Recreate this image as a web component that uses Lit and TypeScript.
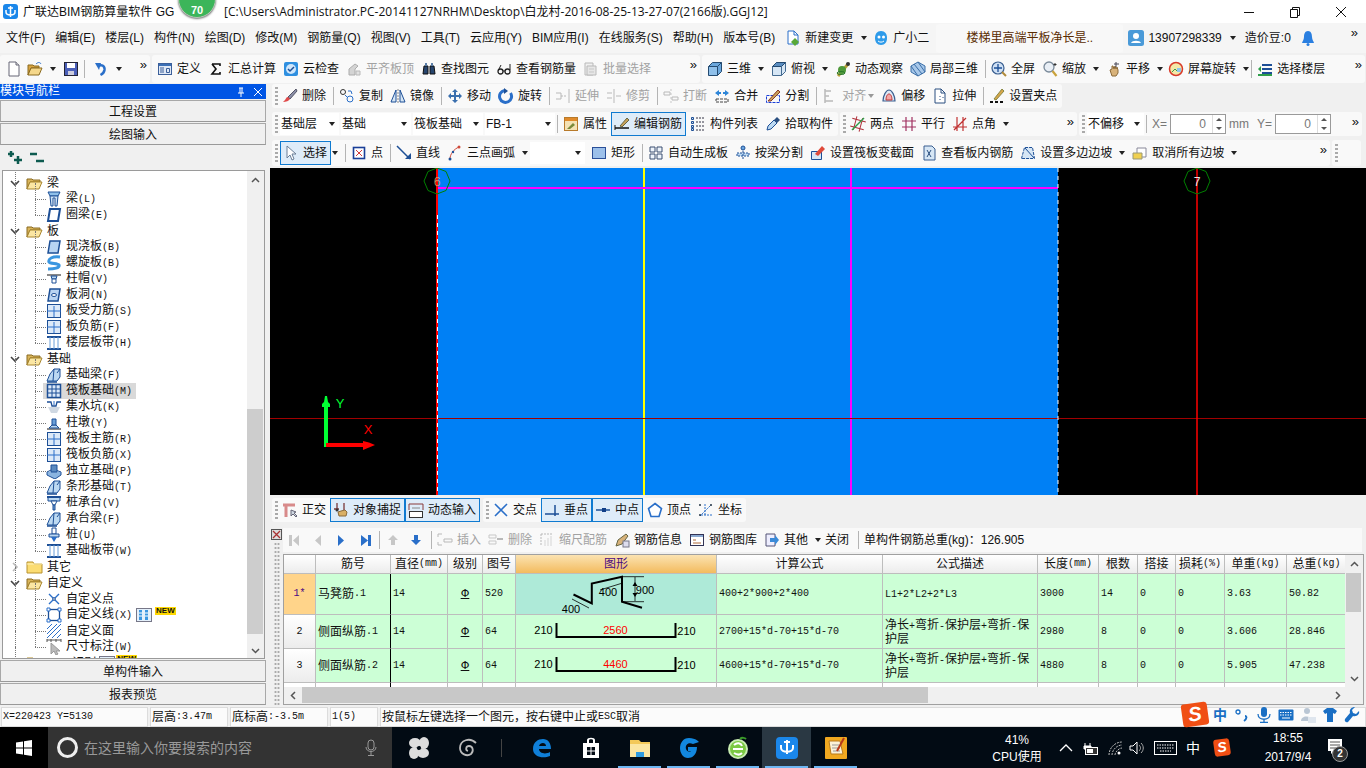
import { LitElement, html, svg, css } from "lit";
import { customElement } from "lit/decorators.js";

// icons, 16x16 unless the wrapper says otherwise
const B = "#2a6fc9";
const D = "#1d4f96";
const I: Record<string, any> = {
  new: svg`<path d="M3 1h7l3 3v11H3z" fill="#fff" stroke="#667"/><path d="M10 1v3h3" fill="#ddd" stroke="#667"/>`,
  open: svg`<path d="M1 4h5l1 1h5v2H4l-3 7z" fill="#d9a441" stroke="#8a6a20"/><path d="M4 7h11l-3 7H1z" fill="#f5d78a" stroke="#8a6a20"/><path d="M9 3c2-2 4-2 5 0" stroke="${B}" fill="none"/>`,
  save: svg`<rect x="1.5" y="1.5" width="13" height="13" fill="#4a5fb8" stroke="#223"/><rect x="4" y="2" width="8" height="5" fill="#fff"/><rect x="5" y="10" width="6" height="4" fill="#ccd"/>`,
  undo: svg`<path d="M5 5c4-2 7 0 6.500 4-.3 2-2 4-4 5" stroke="${B}" stroke-width="2.500" fill="none"/><path d="M2 2h6L6 9z" fill="${B}"/>`,
  define: svg`<rect x="1.500" y="2.500" width="13" height="11" fill="#dfe8f5" stroke="#3b5f9a"/><rect x="2" y="3" width="12" height="2" fill="#3b6fb5"/><path d="M3 7h4M3 9h4M3 11h4M9.500 7.500h3v4h-3z" stroke="#3b5f9a" fill="none"/>`,
  sigma: svg`<path d="M4 3h8v2M4 3l4 5-4 5h8v-2" fill="none" stroke="#111" stroke-width="1.600"/>`,
  cloud: svg`<rect x="1" y="1" width="14" height="14" rx="2" fill="#2e8fe0"/><circle cx="8" cy="8" r="5" fill="#cfe6fb"/><path d="M5 8l2 2 4-4" stroke="${D}" stroke-width="1.500" fill="none"/>`,
  flush: svg`<path d="M3 14V8l6-5 3 2-3 3v6z" fill="#ccc" stroke="#999"/><path d="M10 10h4v4h-4z" fill="#ddd" stroke="#aaa"/>`,
  binoc: svg`<path d="M2 13l1-8h4v8zM9 13V5h4l1 8z" fill="#26456e" stroke="#111"/><path d="M4 2h2v3H4zM10 2h2v3h-2z" fill="#5b7fa8"/><rect x="7" y="6" width="2" height="3" fill="#888"/>`,
  glass: svg`<circle cx="4.500" cy="10.500" r="2.500" fill="none" stroke="#222" stroke-width="1.300"/><circle cx="11.500" cy="10.500" r="2.500" fill="none" stroke="#222" stroke-width="1.300"/><path d="M7 10h2M2.500 9L5 4M14 9V3" stroke="#222" fill="none"/>`,
  batch: svg`<path d="M2 2h8v12H2z" fill="#eee" stroke="#aaa"/><path d="M4 5h9v9H4z" fill="#e2e2e2" stroke="#aaa"/><path d="M6 8h5M6 11h5" stroke="#bbb"/>`,
  cube: svg`<path d="M1.500 5.500l4-4h9v9l-4 4h-9z" fill="#6ba7dc" stroke="#244a70"/><path d="M1.500 5.500h9v9M10.500 5.500l4-4" stroke="#244a70" fill="none"/><path d="M2 6h8v8H2z" fill="#8fc0ea"/>`,
  cube2: svg`<path d="M1.500 5.500l4-4h9v9l-4 4h-9z" fill="#d6e6f5" stroke="#446a90"/><path d="M1.500 5.500l4-4h9l-4 4z" fill="#5a8dc0" stroke="#244a70"/><path d="M10.500 5.500v9" stroke="#446a90"/>`,
  orbit: svg`<path d="M3 15L13 3" stroke="#b9a13a" stroke-width="3"/><circle cx="7" cy="9" r="4" fill="#4f9a3b"/><circle cx="13" cy="3" r="2" fill="#333"/><ellipse cx="6" cy="12" rx="4" ry="1.500" fill="none" stroke="#2b7a2b"/>`,
  local3d: svg`<path d="M8 1l7 4v6l-7 4-7-4V5z" fill="#a8c8ea" stroke="#3b6fa8"/><path d="M4 3l8 10M8 1l7 10M1 5l7 10" stroke="#3b6fa8" fill="none"/>`,
  zfull: svg`<circle cx="7" cy="7" r="6" fill="#cfe0f4" stroke="#3a5f90" stroke-width="1.200"/><path d="M7 3v8M3 7h8" stroke="${D}" stroke-width="1.300"/><path d="M11 11l4 4" stroke="#b08a3a" stroke-width="2"/>`,
  zoom: svg`<circle cx="7" cy="6" r="5" fill="#e8eef5" stroke="#7a8a9a" stroke-width="1.300"/><path d="M10.500 10l4 5" stroke="#c9a23c" stroke-width="2.200"/><path d="M13 2v3M11.500 3.500h3" stroke="#333"/>`,
  pan: svg`<path d="M4 9l2-1V5l1 0 1 3 1-3 1 3 1-2 1 3v3l-2 3H6z" fill="#d8b27a" stroke="#8a6a3a"/><path d="M10 1v5M8 3h5" stroke="#445" fill="none"/>`,
  screen: svg`<circle cx="8" cy="8" r="6.500" fill="#f4e9a8" stroke="#d83a2a" stroke-width="1.500"/><path d="M4 11l3-3 2 2 3-3" stroke="#3a9a4a" fill="none"/><rect x="9" y="7" width="4" height="4" fill="#8fc4ea"/>`,
  floor: svg`<path d="M5 4h10M5 8h10M5 12h10" stroke="${D}" stroke-width="2"/><path d="M1 8l3-3v6z" fill="#2e9e4a"/><path d="M1 14h14" stroke="#2e9e4a" stroke-width="2"/>`,
  docnew: svg`<path d="M3 1h6l4 4v9H3z" fill="#fff" stroke="${B}"/><path d="M9 1v4h4" fill="none" stroke="${B}"/><path d="M10 8l4 4-4 4-4-4z" fill="#58a838"/>`,
  xiao: svg`<path d="M2 8c0-4 2-7 6-7s6 3 6 7-2 7-6 7-6-3-6-7z" fill="#2e9bea"/><circle cx="6" cy="7" r="1.500" fill="#fff"/><circle cx="10.500" cy="7" r="1.500" fill="#fff"/><path d="M5 11c2 1.500 4 1.500 6 0" stroke="#fff" fill="none"/>`,
  user: svg`<rect width="16" height="16" rx="2.500" fill="#4a9ad8"/><circle cx="8" cy="6" r="3" fill="#fff"/><path d="M3 13c1-3 9-3 10 0z" fill="#fff"/>`,
  bell: svg`<path d="M8 1c3 0 4 3 4 6 0 3 2 5 2 6H2c0-1 2-3 2-6 0-3 1-6 4-6z" fill="#2a7fe0"/><circle cx="8" cy="14.500" r="1.500" fill="#2a7fe0"/>`,
  erase: svg`<path d="M14 1L6 9l2 2 7-8z" fill="#8a8fa8" stroke="#556"/><path d="M6 9c-2 0-2 2-3 3l-2 2c3 0 6-1 7-3z" fill="#e04a4a"/>`,
  copy: svg`<circle cx="4" cy="4" r="2.500" fill="none" stroke="#333"/><circle cx="11" cy="11" r="3" fill="none" stroke="${B}"/><path d="M6 7l3 3M9 3h3l1 3" stroke="${B}" fill="none"/>`,
  mirror: svg`<path d="M6 2L1 14h5zM10 2l5 12h-5z" fill="#d6e6f5" stroke="${D}"/><path d="M8 1v14" stroke="#888" stroke-dasharray="2 1"/>`,
  move: svg`<path d="M8 1l3 3H9v3h3V5l3 3-3 3V9H9v3h2l-3 3-3-3h2V9H4v2L1 8l3-3v2h3V4H5z" fill="#3a6fae"/>`,
  rot: svg`<path d="M12.500 5a6 6 0 1 1-6-2.500" stroke="${B}" stroke-width="3" fill="none"/><path d="M6 0l4 3-4 3z" fill="${D}"/>`,
  extend: svg`<path d="M1 5h5v6H1M14 1v14" stroke="#aaa" fill="none"/><path d="M6 8h6" stroke="#aaa" stroke-dasharray="2 1"/>`,
  trim: svg`<path d="M8 1v14M1 5h5M1 10h5M10 8h5" stroke="#aaa" fill="none"/>`,
  brk: svg`<path d="M1 4h6v3H1zM9 9h6v3H9z" fill="none" stroke="#aaa"/><path d="M8 1v14" stroke="#bbb" stroke-dasharray="2 2"/>`,
  merge: svg`<path d="M1 5l4-3v2h2v2H5v2zM15 5l-4-3v2H9v2h2v2z" fill="#2e86d8"/><path d="M2 11h12v3H2z" fill="none" stroke="#444" stroke-dasharray="3 1"/>`,
  split: svg`<path d="M1.500 7.500h13v7h-13z" fill="none" stroke="#1a3fd8" stroke-dasharray="3 1"/><path d="M3 13L13 2l2 2-9 9z" fill="#c9a25a" stroke="#8a3a2a"/>`,
  align: svg`<path d="M3 1v14M3 3h6M3 8h4M3 13h8" stroke="#aaa" fill="none" stroke-width="1.500"/>`,
  offset: svg`<path d="M2 13c0-5 3-11 6-11s6 6 6 11z" fill="#dde8f5" stroke="#3a5f90" stroke-width="1.200"/><path d="M5 12c0-3 1-6 3-6s3 3 3 6z" fill="#f4a6a6" stroke="#c03a3a"/>`,
  stretch: svg`<path d="M3 1h6l4 4v10H3z" fill="#fff" stroke="#2a4f80"/><path d="M9 1v4h4M8 8v1M8 11v1M11 9v1" stroke="#2a4f80" fill="none"/>`,
  grip: svg`<path d="M5 11l8-10 2 2-8 9z" fill="#d8a64a" stroke="#884"/><path d="M1 14h3M6 14h3M11 14h3" stroke="#111" stroke-width="2"/>`,
  props: svg`<rect x="1.500" y="1.500" width="13" height="13" fill="#f4e2b4" stroke="#b87a2a"/><rect x="2" y="2" width="12" height="3" fill="#e08a2a"/><path d="M4 13l6-6 2 2-5 4z" fill="#7a8a3a"/>`,
  editbar: svg`<path d="M1 12h14" stroke="#111" stroke-width="1.500"/><path d="M6 10l7-8 2 2-7 7z" fill="#c9a25a" stroke="#664"/><path d="M1 9v5" stroke="#111"/>`,
  list: svg`<path d="M6 2h9M6 6h9M6 10h9M6 14h9" stroke="#334" stroke-dasharray="2 1"/><path d="M1.500 1.500h2v2h-2zM1.500 5.500h2v2h-2zM1.500 9.500h2v2h-2zM1.500 12.500h2v2h-2z" fill="#cde" stroke="${D}"/>`,
  pick: svg`<path d="M2 14l1-4 6-6 3 3-6 6z" fill="#bcd9f2" stroke="${D}"/><path d="M9 4l3-3 3 3-3 3z" fill="#2a4f80"/>`,
  twopt: svg`<path d="M1 4h14M1 12h14M5 1v14M11 1v14" stroke="#b0303a" transform="rotate(15 8 8)"/><path d="M2 14L14 2" stroke="#2e9e4a" stroke-width="1.400"/>`,
  parallel: svg`<path d="M1 5h14M1 11h14M5 1v14M11 1v14" stroke="#a03060" stroke-width="1.200"/>`,
  angle: svg`<path d="M1 11h14M5 1v14M11 1v14M2 14L14 2" stroke="#c03030" stroke-width="1.200"/>`,
  cursor: svg`<path d="M4 1v12l3-3 2 5 2-1-2-5h4z" fill="#fff" stroke="#6a7f98"/>`,
  point: svg`<rect x="2.500" y="2.500" width="11" height="11" fill="#fff" stroke="#1a3f98" stroke-width="1.600"/><path d="M5 5l6 6M11 5l-6 6" stroke="#d03a3a"/>`,
  line: svg`<path d="M1 1l13 13" stroke="${D}" stroke-width="1.500"/><path d="M9 14h6V8z" fill="${D}"/>`,
  arc: svg`<path d="M3 14c0-5 4-10 9-12" stroke="#d04a3a" fill="none"/><circle cx="3" cy="14" r="1.500" fill="${D}"/><circle cx="12" cy="2" r="1.500" fill="#d04a3a"/><circle cx="6" cy="7" r="1.200" fill="${D}"/>`,
  rect: svg`<rect x="1.500" y="2.500" width="13" height="11" fill="#9cc0ea" stroke="#2a4f98"/>`,
  autogen: svg`<path d="M2 2h5v5H2zM9 2h5v5H9zM2 9h5v5H2zM9 9h5v5H9z" fill="#eef4fb" stroke="#3a4f70"/>`,
  bsplit: svg`<circle cx="8" cy="3" r="2" fill="#6aa6e0" stroke="${D}"/><path d="M2 8h12v3H2z" fill="#bcd9f2" stroke="${D}" stroke-dasharray="2 1"/><path d="M8 6v9" stroke="${D}" stroke-dasharray="2 1"/>`,
  cross: svg`<path d="M1.500 6.500h10v8h-10z" fill="#d6e6f5" stroke="${D}"/><path d="M5 9l7-8 3 3-7 7z" fill="#e04a3a"/>`,
  viewbar: svg`<path d="M3 1h8l3 3v11H3z" fill="#d6e6f5" stroke="#3a5f90"/><path d="M6 5l4 7M10 5l-4 7" stroke="#2a4f80"/>`,
  slope: svg`<path d="M1.500 13.500l3-11h8l2 11z" fill="#d6e6f5" stroke="${D}" stroke-dasharray="3 1"/><path d="M5 3l9 10" stroke="${D}"/>`,
  noslope: svg`<path d="M5 3h9v9H5z" fill="#fff" stroke="#889"/><path d="M1 8h9v6H1z" fill="#f0d050" stroke="#997"/>`,
  ortho: svg`<path d="M1 3h12M4 3v12" stroke="#d88a8a" stroke-width="3"/><path d="M9 8v6l2-2 3 3 1-1-3-3 2-1z" fill="#cfd8e2" stroke="#667"/>`,
  snap: svg`<path d="M5 10l3-1 4-1 2 2-1 4H6z" fill="#d9b066" stroke="#8a6a3a"/><path d="M1 7h5M4 1v7M11 1v7" stroke="#7a3a3a" stroke-width="1.300"/><circle cx="4" cy="8" r="1.500" fill="#333"/>`,
  dyn: svg`<path d="M1 2h14M1 2v6M15 2v6" stroke="#8a3a3a"/><rect x="1.500" y="9.500" width="13" height="6" fill="#fff" stroke="#333"/><path d="M4 6h8" stroke="#888"/>`,
  inter: svg`<path d="M2 2l12 12M14 2L2 14" stroke="${B}" stroke-width="1.600"/>`,
  perp: svg`<path d="M1 12h14" stroke="${D}" stroke-width="1.500"/><path d="M11 3v11" stroke="${D}" stroke-width="1.500"/>`,
  mid: svg`<path d="M1 8h14" stroke="${D}" stroke-width="1.500"/><rect x="7" y="6" width="4" height="4" fill="#123f88"/>`,
  vertex: svg`<path d="M8 1.500l6.500 5-2.500 8H4l-2.500-8z" fill="#fff" stroke="${B}" stroke-width="1.600"/>`,
  coord: svg`<path d="M3 13h12M7 2v12M2 14L13 3" stroke="${B}" stroke-dasharray="2 1"/><circle cx="2" cy="3" r="1" fill="#234"/><circle cx="13" cy="3" r="1" fill="#234"/><circle cx="2" cy="13" r="1" fill="#234"/>`,
  first: svg`<path d="M3 3h3v11H3zM13 3v11L7 8.500z" fill="#bbb"/>`,
  prev: svg`<path d="M11 3v11L5 8.500z" fill="#bbb"/>`,
  next: svg`<path d="M5 3v11l6-5.500z" fill="${B}"/>`,
  last: svg`<path d="M3 3v11l7-5.500zM10 3h3v11h-3z" fill="${B}"/>`,
  up: svg`<path d="M8 3l5 5h-3v5H6V8H3z" fill="#bbb"/>`,
  down: svg`<path d="M8 13L3 8h3V3h4v5h3z" fill="${B}"/>`,
  ins: svg`<path d="M1 2h4M1 13h4M1 2v3M1 10v3M7 7h8v3H7z" stroke="#aaa" fill="none"/>`,
  del2: svg`<path d="M1 3h7v3H1zM1 9h7v3H1z" fill="none" stroke="#bbb"/><path d="M9 7h6" stroke="#aaa" stroke-width="2"/>`,
  scale: svg`<path d="M2 2h12M2 2v12" stroke="#aaa" stroke-dasharray="2 1"/><path d="M6 14V8M9 14V6M12 14V4" stroke="#ccc"/>`,
  info: svg`<path d="M2 14l2-6 8-6 2 2-6 8z" fill="#d8b27a" stroke="#664"/><rect x="9" y="9" width="6" height="6" fill="#dde" stroke="#778"/>`,
  lib: svg`<rect x="1.500" y="2.500" width="13" height="11" fill="#fff" stroke="#335"/><rect x="2" y="3" width="12" height="2" fill="#8aa8d0"/><path d="M4 8h3M4 11h8" stroke="#b06a3a"/>`,
  other: svg`<path d="M2 2h9v12H2z" fill="#eef" stroke="#557"/><path d="M6 6h5V3l4 5-4 5v-3H6z" fill="#3a8ad8"/>`,
  grow: svg`<path d="M2 1h12l-2 4H4z" fill="#8fc0ea" stroke="${D}"/><path d="M4 5h8l-1 10H9V7H7v8H5z" fill="#cfe3f6" stroke="${D}"/>`,
  ring: svg`<path d="M4 2h10l-2 12H2z" fill="#fff" stroke="${D}" stroke-width="2"/>`,
  slab: svg`<path d="M4 2h10l-2 12H2z" fill="#b8d4f2" stroke="${D}" stroke-width="1.500"/>`,
  spiral: svg`<path d="M14 2C6 1 2 4 3 7c1 2 9 1 10 3 1 3-5 4-11 4" stroke="#3a96e0" stroke-width="3" fill="none"/>`,
  cap: svg`<path d="M1 3h14v2H1z" fill="#888"/><path d="M5 5h6l-1 3H6z" fill="#bcd9f2" stroke="${D}"/><path d="M6 8h4v4H6z" fill="#fff" stroke="${D}"/>`,
  hole: svg`<path d="M4 2h10l-2 12H2z" fill="#b8d4f2" stroke="${D}" stroke-width="1.500"/><ellipse cx="8" cy="8" rx="2.500" ry="1.500" fill="#fff" stroke="${D}"/>`,
  gridc: svg`<rect x="1.500" y="1.500" width="13" height="13" fill="#dce9f8" stroke="${D}"/><path d="M1 8h14M8 3v11" stroke="${B}"/>`,
  band: svg`<path d="M1 2h14M1 14h14" stroke="${D}" stroke-width="2"/><path d="M4 2v12M8 2v12M12 2v12" stroke="#6a9fd8"/>`,
  fbeam: svg`<path d="M1 14l3-7 4-5h6v8l-3 4z" fill="#bcd9f2" stroke="${D}"/><path d="M8 2l-1 12M11 6l3-4" stroke="${D}"/><path d="M1 15h10" stroke="${D}" stroke-width="1.500"/>`,
  raft: svg`<rect x="1.500" y="1.500" width="13" height="13" fill="#dce9f8" stroke="${D}" stroke-width="1.500"/><path d="M1 6h14M1 10h14M6 1v14M10 1v14" stroke="${D}"/>`,
  pit: svg`<path d="M1 3h4l1 4h4l1-4h4" stroke="${D}" fill="none" stroke-width="1.300"/><path d="M2 8l3 6h6l3-6z" fill="#cfd8e2"/><path d="M8 2v4" stroke="${B}"/>`,
  pier: svg`<path d="M1 13h14v2H1z" fill="#888"/><path d="M3 13l3-3h4l3 3z" fill="#bcd9f2" stroke="${D}"/><path d="M6 4h4v6H6z" fill="#6a9fd8" stroke="${D}"/>`,
  iso: svg`<path d="M1 9l6-3 8 3-6 4z" fill="#d8e6f5" stroke="${D}"/><path d="M1 9v3l8 4 6-4V9" fill="#8ab4e0" stroke="${D}"/><path d="M5 2h6v7H5z" fill="#5a8ac0" stroke="${D}"/>`,
  pcap: svg`<path d="M2 2h12v4H2z" fill="#bcd9f2" stroke="${D}"/><path d="M1 2h14" stroke="${D}" stroke-width="2"/><path d="M5 6h6l-2 4H7z" fill="#fff" stroke="${D}"/><path d="M7 10h2v5H7z" fill="#6a9fd8" stroke="${D}"/>`,
  pile: svg`<path d="M6 1h4v6H6z" fill="#fff" stroke="${D}"/><path d="M3 7h10v3H3z" fill="#bcd9f2" stroke="${D}"/><path d="M5 10h6l-3 5z" fill="${B}"/>`,
  cx: svg`<path d="M3 3l10 10M13 3L3 13" stroke="${B}" stroke-width="1.400"/><circle cx="8" cy="8" r="1.300" fill="#fff" stroke="${D}"/>`,
  cline: svg`<rect x="2.500" y="2.500" width="11" height="11" fill="#fff" stroke="${D}" stroke-width="1.300"/><path d="M1 1h3v3H1zM12 1h3v3h-3zM1 12h3v3H1zM12 12h3v3h-3z" fill="#fff" stroke="${B}"/>`,
  chatch: svg`<path d="M1 6l5-5M1 11L11 1M1 15L15 1M6 15l9-9M11 15l4-4" stroke="${B}"/>`,
  dim: svg`<path d="M1 1h14M1 0v3M15 0v3M5 0v3M10 0v3" stroke="#555"/><path d="M5 4v11l3-3 2 4 2-1-2-3h4z" fill="#bbb" stroke="#999"/>`,
  libn: svg`<rect x="0.500" y="1.500" width="15" height="13" fill="#e4f0fb" stroke="#778"/><path d="M3 3h3v10H3zM9 3h3v10H9z" fill="#3a96e0"/><path d="M3 6h3M3 9h3M9 6h3M9 9h3" stroke="#fff"/>`,
};

const ic = (n: string, cls = "ic") => html`<svg class=${cls} viewBox="0 0 16 16">${I[n]}</svg>`;

// latin runs of the bitmap-font parts are set narrower, like the original's SimSun
const lat = (s: string) =>
  s.split(/([\u0000-\u02ff]+)/).map((p, i) => (i % 2 ? html`<span class="m">${p}</span>` : p));

const t = (i: string, l: string, o: any = {}) => ({ i, l, ...o });
const SEP = { sep: 1 };
const GRAB = { grab: 1 };
const MORE = { more: 1 };
const sp = (w: number) => ({ sp: w });

const row1 = [
  { w: 150, p: 6, items: [t("new", "", { mr: 5 }), t("open", "", { a: 1 }), t("save", "", { mr: 5 }), SEP, sp(3), t("undo", "", { a: 1 }), MORE] },
  { w: 548, p: 5, items: [t("define", "定义"), t("sigma", "汇总计算"), t("cloud", "云检查"), t("flush", "平齐板顶", { d: 1 }), t("binoc", "查找图元"), t("glass", "查看钢筋量"), t("batch", "批量选择", { d: 1 }), MORE] },
  { w: 663, p: 5, items: [t("cube", "三维", { a: 1 }), t("cube2", "俯视", { a: 1 }), t("orbit", "动态观察"), t("local3d", "局部三维"), SEP, t("zfull", "全屏"), t("zoom", "缩放", { a: 1 }), t("pan", "平移", { a: 1, mr: 5 }), t("screen", "屏幕旋转", { a: 1, mr: 2 }), SEP, t("floor", "选择楼层"), MORE] },
];
const row2 = [
  { w: 790, p: 0, items: [GRAB, sp(2), t("erase", "删除"), SEP, t("copy", "复制"), t("mirror", "镜像"), SEP, t("move", "移动"), t("rot", "旋转"), SEP, t("extend", "延伸", { d: 1 }), t("trim", "修剪", { d: 1 }), SEP, t("brk", "打断", { d: 1 }), t("merge", "合并"), t("split", "分割"), SEP, t("align", "对齐", { d: 1, a: 2 }), t("offset", "偏移"), t("stretch", "拉伸"), SEP, t("grip", "设置夹点")] },
];
const row3 = [
  { w: 566, p: 0, items: [GRAB, { sel: "基础层", w: 55 }, { sel: "基础", w: 66 }, { sel: "筏板基础", w: 66 }, { sel: "FB-1", w: 66 }, SEP, t("props", "属性", { mr: 4 }), t("editbar", "编辑钢筋", { on: 1, mr: 4 }), t("list", "构件列表"), t("pick", "拾取构件")] },
  { w: 237, p: 0, items: [GRAB, sp(2), t("twopt", "两点"), t("parallel", "平行"), t("angle", "点角", { a: 1 }), MORE] },
  { w: 283, p: 0, items: [GRAB, { sel: "不偏移", w: 53 }, SEP, { txt: "X=" }, { spin: 1 }, { txt: "mm", mr: 8 }, { txt: "Y=" }, { spin: 1 }, MORE] },
];
const row4 = [
  { w: 1058, p: 0, items: [GRAB, t("cursor", "选择", { on: 1, mr: 0 }), { arr: 1 }, SEP, t("point", "点"), SEP, t("line", "直线"), t("arc", "三点画弧", { a: 1, mr: 2 }), { sel: "", w: 51 }, sp(4), t("rect", "矩形"), SEP, t("autogen", "自动生成板"), t("bsplit", "按梁分割"), t("cross", "设置筏板变截面"), t("viewbar", "查看板内钢筋"), t("slope", "设置多边边坡", { a: 1 }), t("noslope", "取消所有边坡", { a: 1 }), MORE] },
  { w: 29, p: 0, items: [GRAB] },
];
const snap = [
  { w: 208, p: 0, items: [GRAB, sp(2), t("ortho", "正交", { mr: 4 }), t("snap", "对象捕捉", { on: 1, mr: 0 }), t("dyn", "动态输入", { on: 1, mr: 0 })] },
  { w: 263, p: 0, items: [GRAB, sp(2), t("inter", "交点", { mr: 4 }), t("perp", "垂点", { on: 1, mr: 0 }), t("mid", "中点", { on: 1, mr: 4 }), t("vertex", "顶点"), t("coord", "坐标")] },
];
const rebarBar = [
  t("first", "", { d: 1, mr: 8 }), t("prev", "", { d: 1, mr: 7 }), t("next", "", { mr: 9 }), t("last", "", { mr: 5 }), SEP, t("up", "", { d: 1 }), t("down", ""), SEP,
  t("ins", "插入", { d: 1 }), t("del2", "删除", { d: 1 }), t("scale", "缩尺配筋", { d: 1 }), t("info", "钢筋信息"), t("lib", "钢筋图库"), t("other", "其他", { a: 1, mr: 4 }),
  { txt: "关闭", mr: 9 }, SEP, { txt: "单构件钢筋总重(kg)：126.905" },
];

const tree: any[] = [
  ["梁", 1, [["grow", "梁(L)"], ["ring", "圈梁(E)"]]],
  ["板", 1, [["slab", "现浇板(B)"], ["spiral", "螺旋板(B)"], ["cap", "柱帽(V)"], ["hole", "板洞(N)"], ["gridc", "板受力筋(S)"], ["gridc", "板负筋(F)"], ["band", "楼层板带(H)"]]],
  ["基础", 1, [["fbeam", "基础梁(F)"], ["raft", "筏板基础(M)", "sel"], ["pit", "集水坑(K)"], ["pier", "柱墩(Y)"], ["gridc", "筏板主筋(R)"], ["gridc", "筏板负筋(X)"], ["iso", "独立基础(P)"], ["fbeam", "条形基础(T)"], ["pcap", "桩承台(V)"], ["fbeam", "承台梁(F)"], ["pile", "桩(U)"], ["band", "基础板带(W)"]]],
  ["其它", 0, []],
  ["自定义", 1, [["cx", "自定义点"], ["cline", "自定义线(X)", "new"], ["chatch", "自定义面"], ["dim", "尺寸标注(W)"]]],
  ["CAD识别", 0, [], "new"],
];

const cols = [32, 75, 57, 35, 33, 201, 166, 155, 61, 39, 38, 49, 62, 60];
const heads = ["", "筋号", "直径(mm)", "级别", "图号", "图形", "计算公式", "公式描述", "长度(mm)", "根数", "搭接", "损耗(%)", "单重(kg)", "总重(kg)"];
const rows = [
  { n: "1*", name: "马凳筋.1", d: "14", fig: "520", f: "400+2*900+2*400", desc: "L1+2*L2+2*L3", len: "3000", c: "14", w1: "3.63", w2: "50.82" },
  { n: "2", name: "侧面纵筋.1", d: "14", fig: "64", f: "2700+15*d-70+15*d-70", desc: "净长+弯折-保护层+弯折-保护层", len: "2980", c: "8", w1: "3.606", w2: "28.846", mid: "2560" },
  { n: "3", name: "侧面纵筋.2", d: "14", fig: "64", f: "4600+15*d-70+15*d-70", desc: "净长+弯折-保护层+弯折-保护层", len: "4880", c: "8", w1: "5.905", w2: "47.238", mid: "4460" },
];

@customElement("app-root")
export class AppRoot extends LitElement {
  static styles = css`
    :host {
      display: flex;
      flex-direction: column;
      position: relative;
      width: 1366px;
      height: 768px;
      overflow: hidden;
      background: #f0f0f0;
      color: #111;
      font: 12px/16px "Liberation Sans", "Noto Sans CJK SC", sans-serif;
    }
    .ic { width: 16px; height: 16px; flex: none; display: block; }
    .m { font-family: "Liberation Mono", monospace; font-size: 10px; }
    .title { height: 23px; background: #fff; display: flex; align-items: center; flex: none; white-space: nowrap; position: relative; }
    .logo { width: 15px; height: 15px; margin: 0 5px 0 3px; flex: none; }
    .tname { width: 201px; flex: none; }
    .path { font-family: "Open Sans", "Noto Sans CJK SC", sans-serif; }
    .badge { position: absolute; left: 178px; top: -20px; width: 38px; height: 38px; border-radius: 50%; background: #3cb55a; border: 1px solid #b8c8b8; box-shadow: 0 1px 2px #777; box-sizing: border-box; color: #fff; font-size: 11px; font-weight: bold; text-align: center; padding-top: 21px; }
    .winbtns { margin-left: auto; margin-right: 2px; display: flex; }
    .winbtns svg { width: 46px; height: 12px; display: block; }
    .menu { height: 30px; flex: none; background: #f5f5f5; display: flex; align-items: center; padding-left: 6px; white-space: nowrap; }
    .menu > span { margin-right: 10px; flex: none; }
    .menu .mi { display: flex; align-items: center; gap: 4px; margin-right: 9px; }
    .menu .mi .arr { margin-left: 4px; }
    .menu .xiao { margin-left: -3px; margin-right: 7px; }
    .menu .tip { width: 187px; height: 29px; background: #f8f8f8; border-radius: 3px; color: #5a2c00; text-align: center; line-height: 29px; margin-right: 5px; }
    .menu .more { margin-left: 26px; margin-right: 0; }
    .bar { display: flex; flex: none; gap: 2px; white-space: nowrap; }
    .top { height: 31px; align-items: center; }
    .band { display: flex; align-items: center; background: #f9f9f9; border-radius: 3px; box-sizing: border-box; height: 100%; flex: none; }
    .top .band { height: 28px; }
    .tb { display: flex; align-items: center; gap: 4px; margin-right: 7px; height: 22px; box-sizing: border-box; flex: none; }
    .tb.d { color: #a2a2a2; }
    .tb.d .ic { filter: grayscale(1); opacity: 0.8; }
    .tb.on { background: #deecf9; border: 1px solid #0f7ad0; padding: 0 3px 0 2px; height: 24px; }
    .arr { width: 0; height: 0; border: 3px solid transparent; border-top: 4px solid #222; border-bottom: 0; margin: 0 0 0 3px; flex: none; }
    .arr.tight { margin-left: -2px; border-top-color: #999; }
    .arr.solo { margin-left: 1px; margin-right: 7px; }
    .sep { width: 1px; height: 18px; background: #b4b4b4; margin: 0 5px 0 0; flex: none; }
    .grab { width: 3px; height: 18px; margin: 0 2px 0 3px; flex: none; background: repeating-linear-gradient(#aaa 0 2px, transparent 2px 4px); }
    .more { margin-left: auto; margin-right: 3px; font-size: 13px; line-height: 12px; align-self: flex-start; margin-top: 4px; flex: none; }
    .sel { display: flex; align-items: center; justify-content: space-between; background: #fff; height: 22px; padding: 0 3px 0 1px; margin-right: 2px; box-sizing: content-box; flex: none; }
    .sel .arr { margin: 0 1px 0 0; }
    .txt { margin-right: 3px; color: #777; flex: none; }
    .rebar-bar .txt { color: #111; margin-right: 7px; }
    .spin { width: 56px; height: 20px; border: 1px solid #9a9a9a; background: #fff; box-sizing: border-box; display: flex; align-items: center; justify-content: flex-end; color: #777; margin-right: 3px; flex: none; }
    .spin b { font-weight: normal; margin-right: 6px; }
    .spin i { width: 12px; height: 18px; border-left: 1px solid #ddd; display: flex; flex-direction: column; justify-content: space-around; align-items: center; }
    .spin i::before { content: ""; border: 3px solid transparent; border-bottom: 3px solid #555; border-top: 0; }
    .spin i::after { content: ""; border: 3px solid transparent; border-top: 3px solid #555; border-bottom: 0; }
    .main { flex: 1; display: flex; min-height: 0; }
    .left { width: 266px; flex: none; display: flex; flex-direction: column; margin-right: 4px; }
    .lhead { height: 15px; background: #0055e5; color: #fff; display: flex; align-items: center; line-height: 15px; flex: none; margin-bottom: 1px; }
    .lhead svg { width: 10px; height: 10px; margin-left: auto; margin-right: 7px; }
    .lhead svg + svg { margin-left: 0; margin-right: 3px; }
    .lbtn { height: 22px; border: 1px solid #a8a8a8; border-bottom-color: #999; box-sizing: border-box; background: #f0f0f0; text-align: center; line-height: 22px; flex: none; margin: 0 0 1px; }
    .ltools { height: 24px; flex: none; display: flex; align-items: center; gap: 6px; padding-left: 7px; }
    .ltools svg { width: 16px; height: 16px; }
    .treebox { flex: 1; min-height: 0; margin: 0 1px 1px 2px; background: #fff; border: 1px solid #9a9a9a; display: flex; overflow: hidden; }
    .tree { flex: 1; overflow: hidden; padding-top: 4px; }
    .r { height: 16px; display: flex; align-items: center; position: relative; white-space: nowrap; }
    .chev { width: 10px; height: 10px; margin: 0 5px 0 7px; flex: none; }
    .folder { width: 17px; height: 15px; margin: 0 4px 0 1px; flex: none; }
    .r.l { padding-left: 43px; }
    .r.l .ic { margin-right: 3px; }
    .r .libn { margin: 0 1px 0 3px; }
    .r.l .lab { padding: 0 1px; }
    .r.sel2::after { content: ""; position: absolute; z-index: 0; left: 40px; width: 93px; top: 0; bottom: 0; background: #d9d9d9; }
    .r > * { position: relative; z-index: 1; }
    .r.l::before { content: ""; position: absolute; left: 32px; top: 8px; width: 11px; border-top: 1px dotted #777; }
    .stem { position: absolute !important; left: 32px; top: -8px; height: 16px; border-left: 1px dotted #777; }
    .trunk { position: absolute !important; left: 12px; top: -8px; height: 16px; border-left: 1px dotted #777; }
    .newtag { color: #111; background: #ffd800; font: bold 8px/8px "Liberation Sans", sans-serif; padding: 0 1px; align-self: flex-start; }
    .vs { width: 17px; background: #f0f0f0; flex: none; display: flex; flex-direction: column; align-items: center; position: relative; }
    .vs .up { margin-top: 6px; }
    .vs .thumb { position: absolute; left: 0; right: 1px; background: #cdcdcd; top: 238px; height: 225px; }
    .vs .dn { position: absolute; bottom: 4px; }
    .vs svg { width: 9px; height: 6px; }
    .right { flex: 1; min-width: 0; display: flex; flex-direction: column; }
    .rbar { padding-left: 2px; }
    .h24 { height: 24px; margin-bottom: 4px; }
    .h26 { height: 26px; margin-bottom: 2px; }
    .canvas { height: 327px; background: #000; flex: none; display: block; width: 1096px; }
    .snap { height: 30px; align-items: center; padding-left: 2px; gap: 3px; }
    .snap .band { height: 24px; }
    .panel { flex: 1; min-height: 0; display: flex; margin-right: 1px; }
    .strip { width: 13px; flex: none; padding-top: 4px; display: flex; flex-direction: column; align-items: center; gap: 2px; }
    .strip svg { width: 11px; height: 11px; }
    .strip i { width: 6px; flex: 1; background: radial-gradient(circle, #aaa 1px, transparent 1.200px) 0 0 / 3px 4px; }
    .pbody { flex: 1; min-width: 0; display: flex; flex-direction: column; }
    .rebar-bar { height: 24px; margin: 3px 3px 2px 0; background: #f9f9f9; padding-left: 3px; display: flex; align-items: center; flex: none; white-space: nowrap; }
    .gridbox { flex: 1; min-height: 0; border: 1px solid #a0a0a0; display: grid; grid-template-columns: 1fr 18px; grid-template-rows: 1fr 17px; background: #f0f0f0; margin-right: 1px; margin-bottom: 1px; }
    .tbl { display: grid; overflow: hidden; grid-template-rows: 19px 41px 34px 34px 20px; background: #fff; font-size: 12px; }
    .c { border-right: 1px solid #bdbdbd; border-bottom: 1px solid #bdbdbd; box-sizing: border-box; display: flex; align-items: center; padding-left: 2px; overflow: hidden; background: #ccffd6; line-height: 12px; min-width: 0; }
    .c.hd { background: linear-gradient(#fff, #ececec); justify-content: center; padding: 0; line-height: 16px; }
    .c.hd.act { background: linear-gradient(#fbe3b2, #f3bb5e); color: #4b0a82; }
    .c.rh { justify-content: center; padding: 0; background: linear-gradient(#fff, #ececec); }
    .c.rh.act { background: #ffd48a; color: #4b0a82; }
    .c.mid { justify-content: center; padding: 0; }
    .c.thick { border-right: 1px solid #000; }
    .c.shape { padding: 0; background: #ccffd6; }
    .c.shape.act { background: #aeead8; }
    .c.shape svg { width: 200px; height: 100%; display: block; }
    .c.blank { background: #fff; }
    .grade { font: 11px/12px "DejaVu Sans", sans-serif; text-decoration: underline; }
    .gvs { background: #f0f0f0; position: relative; display: flex; flex-direction: column; align-items: center; }
    .gvs .thumb { position: absolute; top: 18px; left: 1px; right: 2px; height: 39px; background: #c8c8c8; }
    .gvs svg, .ghs svg { width: 9px; height: 7px; flex: none; }
    .gvs .up { margin-top: 6px; }
    .gvs .dn { position: absolute; bottom: 5px; }
    .ghs { grid-column: 1 / 3; display: flex; align-items: center; position: relative; }
    .ghs .lt { width: 7px; height: 9px; margin-left: 6px; }
    .ghs .thumb { position: absolute; left: 18px; width: 626px; top: 0; bottom: 1px; background: #c8c8c8; }
    .ghs .rt { width: 7px; height: 9px; position: absolute; right: 22px; }
    .status { height: 20px; flex: none; margin-top: 1px; display: flex; gap: 2px; padding-left: 1px; white-space: nowrap; position: relative; }
    .s { background: #fbfbfb; border: 1px solid #dcdcdc; box-sizing: border-box; display: flex; align-items: center; padding-left: 1px; flex: none; height: 20px; }
    .s1 { width: 147px; }
    .s2 { width: 78px; }
    .s3 { width: 98px; }
    .s4 { width: 48px; }
    .s5 { flex: 1; }
    .sg { position: absolute; right: 0; top: -5px; height: 25px; width: 184px; display: flex; align-items: center; color: #1a6fc4; }
    .sbox { width: 26px; height: 23px; background: #f04e14; border-radius: 3px; transform: rotate(-8deg); color: #fff; font: italic bold 20px/23px "Liberation Sans", sans-serif; text-align: center; margin: 0 5px 0 0; flex: none; }
    .sg .zh { font-weight: bold; font-size: 14px; color: #1a6fc4; margin-right: 7px; }
    .sg svg { width: 16px; height: 16px; margin-right: 6px; flex: none; }
    .task { height: 41px; flex: none; background: #020b14; display: flex; align-items: center; color: #fff; white-space: nowrap; }
    .start { width: 48px; height: 100%; background: #000; display: flex; align-items: center; justify-content: center; flex: none; }
    .search { width: 344px; height: 100%; background: #333; display: flex; align-items: center; color: #999; font-size: 14px; flex: none; box-sizing: border-box; padding-left: 9px; margin-right: 2px; }
    .search .ring { width: 15px; height: 15px; border: 3px solid #eee; border-radius: 50%; margin-right: 6px; box-sizing: content-box; flex: none; }
    .search svg { width: 16px; height: 18px; margin-left: auto; margin-right: 13px; }
    .slot { width: 49px; height: 100%; display: flex; align-items: center; justify-content: center; flex: none; position: relative; box-sizing: border-box; }
    .slot svg { width: 24px; height: 24px; }
    .slot.ul::after { content: ""; position: absolute; left: 3px; right: 3px; bottom: 0; height: 2px; background: #6db6f2; }
    .slot.act { background: #2a3843; }
    .tsep { width: 1px; height: 18px; background: #444; margin: 0 15px 0 9px; flex: none; }
    .cpu { margin-left: 132px; width: 50px; text-align: center; line-height: 17px; flex: none; padding-top: 3px; }
    .ti { height: 16px; width: 16px; flex: none; }
    .t-chev { margin-left: 16px; }
    .t-batt { margin-left: 8px; }
    .t-wifi { margin-left: 9px; }
    .t-vol { margin-left: 6px; }
    .t-kb { margin-left: 9px; width: 23px; }
    .tc { margin-left: 9px; font-size: 14px; flex: none; }
    .tsg { margin-left: 14px; width: 16px; height: 17px; font-size: 14px; line-height: 17px; margin-right: 0; }
    .clock { margin-left: 23px; width: 70px; text-align: center; line-height: 19px; flex: none; }
    .notif { margin-left: 3px; position: relative; width: 20px; height: 20px; flex: none; }
    .notif svg { width: 18px; height: 18px; display: block; }
    .nbadge { position: absolute; left: 6px; top: 8px; width: 16px; height: 16px; border-radius: 50%; background: #333; border: 1px solid #999; box-sizing: border-box; font: bold 10px/14px "Liberation Sans", sans-serif; text-align: center; }
  `;

  private item(it: any): any {
    if (it.sep) return html`<span class="sep"></span>`;
    if (it.grab) return html`<span class="grab"></span>`;
    if (it.more) return html`<span class="more">»</span>`;
    if (it.sp) return html`<span style="width:${it.sp}px;flex:none"></span>`;
    if (it.arr) return html`<span class="arr solo"></span>`;
    if (it.txt) return html`<span class="txt" style=${it.mr !== undefined ? `margin-right:${it.mr}px` : ""}>${it.txt}</span>`;
    if (it.spin) return html`<span class="spin"><b>0</b><i></i></span>`;
    if (it.sel !== undefined)
      return html`<span class="sel" style="width:${it.w}px"><span>${it.sel}</span><span class="arr"></span></span>`;
    return html`<span class="tb ${it.d ? "d" : ""} ${it.on ? "on" : ""}" style=${it.mr !== undefined ? `margin-right:${it.mr}px` : ""}>
      ${ic(it.i)}${it.l ? html`<span>${it.l}</span>` : ""}${it.a ? html`<span class="arr ${it.a === 2 ? "tight" : ""}"></span>` : ""}
    </span>`;
  }

  private band(b: any) {
    return html`<div class="band" style="width:${b.w}px;padding-left:${b.p}px">${b.items.map((x: any) => this.item(x))}</div>`;
  }

  private renderTree() {
    const down = html`<svg class="chev" viewBox="0 0 10 10"><path d="M1 3l4 4 4-4" fill="none" stroke="#444" stroke-width="1.600"/></svg>`;
    const rt = html`<svg class="chev" viewBox="0 0 10 10"><path d="M3 1l4 4-4 4" fill="none" stroke="#bbb" stroke-width="1.600"/></svg>`;
    const openF = html`<svg class="folder" viewBox="0 0 17 15"><path d="M1 3h5l1 1h7v2H4l-3 7z" fill="#d9b45a" stroke="#8a6a20"/><path d="M4 6h12l-3 7H1z" fill="#fbe6a2" stroke="#a8862f"/></svg>`;
    const closedF = html`<svg class="folder" viewBox="0 0 17 15"><path d="M1 2h6l1 2h8v9H1z" fill="#fbdc72" stroke="#b8922f"/><path d="M1 4h15" stroke="#fff2b8"/></svg>`;
    const tag = html`${ic("libn", "ic libn")}<span class="newtag">NEW</span>`;
    return tree.map(
      ([name, open, kids, f0]: any) => html`
        <div class="r g"><span class="trunk"></span>${open ? down : rt}${open ? openF : closedF}<span>${name}</span>${f0 === "new" ? tag : ""}</div>
        ${kids.map(
          ([i, l, f]: any) => html`
            <div class="r l ${f === "sel" ? "sel2" : ""}">
              <span class="trunk"></span><span class="stem"></span>${ic(i)}<span class="lab">${lat(l)}</span>
              ${f === "new" ? tag : ""}
            </div>
          `
        )}
      `
    );
  }

  private shape(r: any) {
    if (!r.mid)
      return svg`<svg viewBox="0 0 200 40" font-family="Liberation Sans" font-size="11" text-anchor="middle">
        <path d="M57.500 20.500L75.800 29.500V9.500L106 2.700V27.700L126 33.700" fill="none" stroke="#000" stroke-width="2"/>
        <path d="M84 16l21-6.500M56 25l17 9M106 2.700h22M106 27.700h22M119 3v24" fill="none" stroke="#000" stroke-width=".8"/>
        <path d="M119 8l-2.500 4h5zM119 23l-2.500-4h5z" fill="#000"/>
        <text x="92" y="22">400</text><text x="129" y="20">900</text><text x="55" y="39">400</text>
      </svg>`;
    return svg`<svg viewBox="0 0 200 33" font-family="Liberation Sans" font-size="11" text-anchor="middle">
      <path d="M40.500 8v14H159.500V8" fill="none" stroke="#000" stroke-width="2"/>
      <text x="27.500" y="19">210</text><text x="170.500" y="20">210</text><text x="99.500" y="19" fill="#f00">${r.mid}</text>
    </svg>`;
  }

  private renderTable() {
    const cells: any[] = [];
    heads.forEach((h, i) => cells.push(html`<div class="c hd ${i === 5 ? "act" : ""}">${lat(h)}</div>`));
    rows.forEach((r, ri) => {
      const a = ri === 0;
      cells.push(html`<div class="c rh ${a ? "act" : ""}">${lat(r.n)}</div>`);
      cells.push(html`<div class="c thick">${lat(r.name)}</div>`);
      cells.push(html`<div class="c">${lat(r.d)}</div>`);
      cells.push(html`<div class="c mid"><span class="grade">Φ</span></div>`);
      cells.push(html`<div class="c">${lat(r.fig)}</div>`);
      cells.push(html`<div class="c shape ${a ? "act" : ""}">${this.shape(r)}</div>`);
      cells.push(html`<div class="c">${lat(r.f)}</div>`);
      cells.push(html`<div class="c"><span>${lat(r.desc)}</span></div>`);
      [r.len, r.c, "0", "0", r.w1, r.w2].forEach((v) => cells.push(html`<div class="c">${lat(v)}</div>`));
    });
    cols.forEach((_, i) => cells.push(html`<div class="c blank ${i === 1 ? "thick" : ""}"></div>`));
    return html`<div class="tbl" style="grid-template-columns:${cols.map((c) => c + "px").join(" ")}">${cells}</div>`;
  }

  private renderCanvas() {
    return svg`<svg class="canvas" viewBox="270 168 1096 327" font-family="Liberation Sans">
      <rect x="437" y="168" width="621" height="327" fill="#0080f5"/>
      <path d="M644 168v327" stroke="#ffff00" stroke-width="2"/>
      <path d="M851 168v327" stroke="#ff00ff" stroke-width="2"/>
      <path d="M437 188H1058" stroke="#ff00ff" stroke-width="2"/>
      <path d="M270 418.500H1366" stroke="#a00000"/>
      <path d="M437 168v327" stroke="#ff0000" stroke-width="2"/>
      <path d="M437.500 215v280" stroke="#fff" stroke-dasharray="4 4"/>
      <path d="M1058 168v327" stroke="#fff" stroke-dasharray="4 4"/>
      <path d="M1197 168v327" stroke="#ff0000" stroke-width="1.500"/>
      <path d="M437 168l9 3.500 4 9.500-4 9.500-9 3.500-9-3.500-4-9.500 4-9.500z M1197 168l9 3.500 4 9.500-4 9.500-9 3.500-9-3.500-4-9.500 4-9.500z" fill="none" stroke="#008000"/>
      <text x="437" y="186" font-size="12" fill="#d08a5a" text-anchor="middle">6</text>
      <text x="1197" y="186" font-size="12" fill="#e8e8e8" text-anchor="middle">7</text>
      <path d="M324 447V407h-2v-3l2-2 1-6h2l1 6 2 2v3h-2v40z" fill="#00ff33"/>
      <path d="M326 443h37v-2l6 1.500 6 2.500-6 2.500-6 2.500v-3h-37z" fill="#ff0000"/>
      <text x="340" y="408" font-size="13" fill="#00ff33" text-anchor="middle">Y</text>
      <text x="368" y="434" font-size="13" fill="#ff0000" text-anchor="middle">X</text>
    </svg>`;
  }

  private renderTask() {
    const slot = (s: any, c = "") => html`<span class="slot ${c}"><svg viewBox="0 0 24 24">${s}</svg></span>`;
    return html`<div class="task">
      <span class="start"><svg width="16" height="16" viewBox="0 0 16 16"><path d="M0 2.500l7-1v6H0zM8 1.300L16 0v7.500H8zM0 8.500h7v6l-7-1zM8 8.500h8V16l-8-1.300z" fill="#fff"/></svg></span>
      <span class="search"><span class="ring"></span>在这里输入你要搜索的内容
        <svg viewBox="0 0 16 18"><rect x="5" y="1" width="6" height="10" rx="3" fill="none" stroke="#999"/><path d="M3 8c0 6 10 6 10 0M8 13v3M5 16.500h6" fill="none" stroke="#999"/></svg></span>
      ${slot(svg`<g fill="#ddd"><ellipse cx="8" cy="7" rx="6" ry="5"/><ellipse cx="17" cy="7" rx="5" ry="6"/><ellipse cx="7" cy="17" rx="5" ry="6"/><ellipse cx="16" cy="17" rx="6" ry="5"/></g><circle cx="12" cy="12" r="2" fill="#020b14"/>`)}
      ${slot(svg`<path d="M20 7C14 1 4 4 4 12c0 6 7 9 11 6 3-3 2-8-2-8-3 0-4 4-1 5" fill="none" stroke="#bbb" stroke-width="1.800"/>`)}
      <span class="tsep"></span>
      ${slot(svg`<path d="M3 13C3 6 8 3 13 3c5 0 8 4 8 10H9c0 4 6 6 11 3v4c-7 3-17 1-17-7zm6-3h7c0-4-6-4-7 0z" fill="#0f7fd8"/>`)}
      ${slot(svg`<path d="M8 7V4c0-3 8-3 8 0v3h4v15H4V7z M10 7h4V4c0-1-4-1-4 0z" fill="#fff" fill-rule="evenodd"/><path d="M8 11h3.500v3.500H8zM12.500 11H16v3.500h-3.500zM8 15.500h3.500V19H8zM12.500 15.500H16V19h-3.500z" fill="#020b14"/>`)}
      ${slot(svg`<path d="M2 4h9l2 2h9v15H2z" fill="#f3c95a"/><path d="M2 8h20v13H2z" fill="#fbe6a2"/><path d="M8 16h8v5H8z" fill="#2e9be0"/>`, "ul")}
      ${slot(svg`<path d="M12 2c7 0 10 4 10 4l-6 2c-5-2-8 1-7 5 1 3 4 3 5 2h-3v-4h9c0 8-5 11-9 11C6 22 3 17 3 12S6 2 12 2z" fill="#1287de"/>`, "ul")}
      ${slot(svg`<circle cx="12" cy="13" r="9" fill="#7bc943" stroke="#c7ecb0" stroke-width="2"/><path d="M7 13h10M8 9c3-3 7-2 8 1M8 17c3 2 6 2 8 0" stroke="#fff" stroke-width="2" fill="none"/><path d="M14 3c2-2 5-1 6 0" stroke="#3a9a2a" fill="none" stroke-width="2"/>`, "ul")}
      ${slot(svg`<rect x="1" y="1" width="22" height="22" rx="4" fill="#1b87ea"/><path d="M12 4v14M6 9v3c0 5 12 5 12 0V9M9 6h6" stroke="#fff" stroke-width="2" fill="none"/>`, "ul act")}
      ${slot(svg`<rect x="1" y="1" width="22" height="22" rx="1" fill="#f0a820"/><path d="M5 5h11l3 13H7z" fill="#fbf2d8" stroke="#b87a1a"/><path d="M8 9h7M8 12h8M9 15h7" stroke="#999"/><path d="M20 2l-7 13" stroke="#b83a1a" stroke-width="2"/>`, "ul")}
      <span class="cpu">41%<br />CPU使用</span>
      <svg class="ti t-chev" viewBox="0 0 16 16"><path d="M2 11l6-6 6 6" fill="none" stroke="#fff" stroke-width="1.300"/></svg>
      <svg class="ti t-batt" viewBox="0 0 16 16"><path d="M3 3v3M8 3v3M2 6h7v3H2z" stroke="#fff" fill="#fff"/><rect x="3.500" y="7.500" width="12" height="7" fill="#333" stroke="#fff"/><rect x="5" y="9" width="6" height="4" fill="#fff"/></svg>
      <svg class="ti t-wifi" viewBox="0 0 16 16"><path d="M2 15C2 8 8 2 15 2M5 15c0-5 5-10 10-10M8 15c0-3 4-7 7-7" stroke="#bbb" fill="none" stroke-dasharray="2 1"/><circle cx="12" cy="13" r="1.500" fill="#fff"/></svg>
      <svg class="ti t-vol" viewBox="0 0 16 16"><path d="M1 6h3l4-4v12l-4-4H1z" fill="none" stroke="#fff"/><path d="M10 5c2 2 2 4 0 6M12 3c3 3 3 7 0 10" fill="none" stroke="#aaa"/></svg>
      <svg class="ti t-kb" viewBox="0 0 23 16"><rect x="0.500" y="1.500" width="22" height="13" fill="none" stroke="#fff"/><path d="M3 5h17M3 8h17M6 11h11" stroke="#fff" stroke-dasharray="1.500 1"/></svg>
      <span class="tc">中</span>
      <span class="sbox tsg">S</span>
      <span class="clock">18:55<br />2017/9/4</span>
      <span class="notif">
        <svg viewBox="0 0 18 18"><path d="M2 1h14v12H8l-3 3v-3H2z" fill="#fff"/><path d="M4 4h10M4 7h10M4 10h6" stroke="#555"/></svg>
        <span class="nbadge">2</span>
      </span>
    </div>`;
  }

  render() {
    return html`
      <div class="title">
        <svg class="logo" viewBox="0 0 15 15"><rect width="15" height="15" rx="3" fill="#1b87ea"/><path d="M7.500 2v11M3 6v2c0 4 9 4 9 0V6M5 4h5" stroke="#fff" stroke-width="1.500" fill="none"/></svg>
        <span class="tname">广联达BIM钢筋算量软件 GG</span>
        <span class="badge">70</span>
        <span class="path">[C:\\Users\\Administrator.PC-20141127NRHM\\Desktop\\白龙村-2016-08-25-13-27-07(2166版).GGJ12]</span>
        <span class="winbtns">
          <svg viewBox="0 0 46 12"><path d="M18 6.500h10" stroke="#111"/></svg>
          <svg viewBox="0 0 46 12"><path d="M18.500 3.500h7v8h-7zM20.500 3.500V1.500h7v8h-2" fill="none" stroke="#111"/></svg>
          <svg viewBox="0 0 46 12"><path d="M18 1l10 10M28 1L18 11" stroke="#111"/></svg>
        </span>
      </div>
      <div class="menu">
        ${["文件(F)", "编辑(E)", "楼层(L)", "构件(N)", "绘图(D)", "修改(M)", "钢筋量(Q)", "视图(V)", "工具(T)", "云应用(Y)", "BIM应用(I)", "在线服务(S)", "帮助(H)", "版本号(B)"].map((m) => html`<span>${m}</span>`)}
        <span class="mi">${ic("docnew")}新建变更<span class="arr"></span></span>
        <span class="mi xiao">${ic("xiao")}广小二</span>
        <span class="tip">楼梯里高端平板净长是..</span>
        <span class="mi">${ic("user")}13907298339<span class="arr"></span></span>
        <span class="mi">造价豆:0</span>
        <span class="mi">${ic("bell")}</span>
        <span class="more">»</span>
      </div>
      <div class="bar top">${row1.map((b) => this.band(b))}</div>
      <div class="main">
        <div class="left">
          <div class="lhead">模块导航栏
            <svg viewBox="0 0 10 10"><path d="M3 1h4M4 1v5M6 1v5M2 6h6M5 6v4" stroke="#fff"/></svg>
            <svg viewBox="0 0 10 10"><path d="M1 1l8 8M9 1l-8 8" stroke="#fff"/></svg>
          </div>
          <div class="lbtn">工程设置</div>
          <div class="lbtn">绘图输入</div>
          <div class="ltools">
            <svg viewBox="0 0 16 16"><path d="M1 4h6M4 1v6M7 10h8M11 6v8" stroke="#0e5b50" stroke-width="2.500"/></svg>
            <svg viewBox="0 0 16 16"><path d="M1 4h7M7 11h8" stroke="#0e5b50" stroke-width="2.500"/></svg>
          </div>
          <div class="treebox">
            <div class="tree">${this.renderTree()}</div>
            <div class="vs">
              <svg class="up" viewBox="0 0 9 6"><path d="M1 5l3.500-3.500L8 5" fill="none" stroke="#555" stroke-width="1.500"/></svg>
              <span class="thumb"></span>
              <svg class="dn" viewBox="0 0 9 6"><path d="M1 1l3.500 3.500L8 1" fill="none" stroke="#555" stroke-width="1.500"/></svg>
            </div>
          </div>
          <div class="lbtn">单构件输入</div>
          <div class="lbtn">报表预览</div>
        </div>
        <div class="right">
          <div class="bar rbar h24">${row2.map((b) => this.band(b))}</div>
          <div class="bar rbar h24">${row3.map((b) => this.band(b))}</div>
          <div class="bar rbar h26">${row4.map((b) => this.band(b))}</div>
          ${this.renderCanvas()}
          <div class="bar snap">${snap.map((b) => this.band(b))}</div>
          <div class="panel">
            <div class="strip">
              <svg viewBox="0 0 11 11"><rect x="0.500" y="0.500" width="10" height="10" fill="#ddd" stroke="#555"/><path d="M2 2l7 7M9 2L2 9" stroke="#a33" stroke-width="1.300"/></svg>
              <i></i>
            </div>
            <div class="pbody">
              <div class="rebar-bar">${rebarBar.map((x) => this.item(x))}</div>
              <div class="gridbox">
                ${this.renderTable()}
                <div class="gvs">
                  <svg class="up" viewBox="0 0 9 7"><path d="M1 5l3.500-3.500L8 5" fill="none" stroke="#555" stroke-width="1.500"/></svg>
                  <span class="thumb"></span>
                  <svg class="dn" viewBox="0 0 9 7"><path d="M1 2l3.500 3.500L8 2" fill="none" stroke="#555" stroke-width="1.500"/></svg>
                </div>
                <div class="ghs">
                  <svg class="lt" viewBox="0 0 7 9"><path d="M5 1L1.500 4.500 5 8" fill="none" stroke="#555" stroke-width="1.500"/></svg>
                  <span class="thumb"></span>
                  <svg class="rt" viewBox="0 0 7 9"><path d="M2 1l3.500 3.500L2 8" fill="none" stroke="#555" stroke-width="1.500"/></svg>
                </div>
              </div>
            </div>
          </div>
        </div>
      </div>
      <div class="status">
        <span class="s s1">${lat("X=220423 Y=5130")}</span>
        <span class="s s2">${lat("层高:3.47m")}</span>
        <span class="s s3">${lat("底标高:-3.5m")}</span>
        <span class="s s4">${lat("1(5)")}</span>
        <span class="s s5">${lat("按鼠标左键选择一个图元，按右键中止或ESC取消")}</span>
        <span class="sg">
          <span class="sbox">S</span><span class="zh">中</span>
          <svg viewBox="0 0 16 16"><circle cx="4" cy="5" r="2" fill="none" stroke="#1a6fc4" stroke-width="1.300"/><path d="M11 9c2 0 2 3-1 5" stroke="#1a6fc4" stroke-width="2" fill="none"/></svg>
          <svg viewBox="0 0 16 16"><rect x="5" y="0" width="6" height="10" rx="3" fill="#1a6fc4"/><path d="M2 7c0 7 12 7 12 0M8 12v3M4 15.500h8" fill="none" stroke="#1a6fc4" stroke-width="1.300"/></svg>
          <svg viewBox="0 0 16 16"><rect x="0.500" y="2.500" width="15" height="11" rx="1" fill="#1a6fc4"/><path d="M2 5.500h12M2 8h12" stroke="#fff" stroke-dasharray="1.500 1"/><path d="M4 11h8" stroke="#fff"/></svg>
          <svg viewBox="0 0 16 16"><circle cx="7" cy="4" r="3" fill="#b9c6d4"/><path d="M1 14c0-6 10-6 12 0z" fill="#b9c6d4"/><rect x="8" y="10" width="8" height="6" fill="#dfe6ee"/></svg>
          <svg viewBox="0 0 16 16"><path d="M5 1h6l4 3-2 3-2-1v9H5V6L3 7 1 4z" fill="#1a6fc4"/></svg>
          <svg viewBox="0 0 16 16"><path d="M15 4l-3 3-3-1-1-3 3-3C8 0 5 2 6 6L1 12c-1 2 1 4 3 3l5-6c4 1 7-2 6-5z" fill="#1a6fc4"/></svg>
        </span>
      </div>
      ${this.renderTask()}
    `;
  }
}
